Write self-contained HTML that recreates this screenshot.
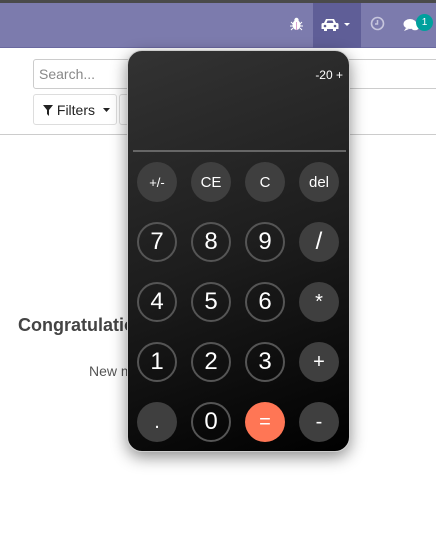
<!DOCTYPE html>
<html><head><style>
*{box-sizing:border-box;margin:0;padding:0}
body{width:436px;height:548px;overflow:hidden;background:#fff;font-family:"Liberation Sans",sans-serif;position:relative}
.top{position:absolute;left:0;top:0;width:436px;height:3px;background:#4a4a4a}
.nav{position:absolute;left:0;top:3px;width:436px;height:45px;background:#7c7bad;border-bottom:1px solid #6a69a0}
.act{position:absolute;left:313px;top:3px;width:48px;height:45px;background:#5f5e97}
.line{position:absolute;background:#ccc;height:1px}
.search{position:absolute;left:33px;top:59px;width:420px;height:30px;border:1px solid #ccc;border-radius:3px;color:#888;font-size:14px;padding:6px 5px}
.btn{position:absolute;left:33px;top:94px;width:84px;height:31px;border:1px solid #ddd;border-radius:3px;font-size:14px;color:#222;padding:7px 0 0 9px}
.btn2{position:absolute;left:119px;top:94px;width:30px;height:31px;border:1px solid #ddd;border-radius:3px}
.h{position:absolute;left:18px;top:315px;font-size:18px;font-weight:bold;color:#444}
.p{position:absolute;left:89px;top:363px;font-size:14px;color:#555}
.calc{position:absolute;left:127px;top:50px;width:223px;height:402px;border-radius:15px;background:linear-gradient(160deg,#333 0%,#1d1d1d 50%,#000 100%);box-shadow:0 5px 16px rgba(0,0,0,.45);border:1px solid #ccc}
.disp{position:absolute;right:6px;top:17px;color:#fff;font-size:12px}
.sep{position:absolute;left:5px;top:99px;width:213px;height:2px;background:#666}
.b{position:absolute;width:40px;height:40px;border-radius:50%;background:#3f3f3f;color:#fff;display:flex;align-items:center;justify-content:center;font-size:15px;font-family:"Liberation Sans",sans-serif}
.n{background:transparent;border:2px solid #555;font-size:24px}
.eq{background:#ff7655}
</style></head><body>
<div class="top"></div><div class="nav"></div><div class="act"></div>
<svg style="position:absolute;left:290px;top:17px" width="13" height="14" viewBox="0 0 13 14"><ellipse cx="6.5" cy="8" rx="4" ry="5" fill="#fff"/><circle cx="6.5" cy="3" r="2.2" fill="#fff"/><path d="M1 5l2 2M12 5l-2 2M0 9h3M10 9h3M1 13l2-2M12 13l-2-2" stroke="#fff"/><line x1="6.5" y1="5" x2="6.5" y2="13" stroke="#d8a0d0" stroke-width="1"/></svg>
<svg style="position:absolute;left:321px;top:18px" width="18" height="13" viewBox="0 0 18 13"><path d="M3 5l2-4h8l2 4h1a1.5 1.5 0 0 1 1.5 1.5V11H15v2h-3v-2H6v2H3v-2H.5V6.5A1.5 1.5 0 0 1 2 5z" fill="#fff"/><circle cx="4" cy="8" r="1.3" fill="#5f5e97"/><circle cx="14" cy="8" r="1.3" fill="#5f5e97"/><path d="M5.5 5l1-2.5h5l1 2.5z" fill="#5f5e97"/></svg>
<svg style="position:absolute;left:344px;top:23px" width="6" height="4"><path d="M0 0h6L3 3z" fill="#fff"/></svg>
<svg style="position:absolute;left:370px;top:16px" width="15" height="15"><circle cx="7.5" cy="7.5" r="6" fill="none" stroke="#c7c6dd" stroke-width="1.6"/><path d="M7.5 4v4h-2.5" fill="none" stroke="#c7c6dd" stroke-width="1.5"/></svg>
<svg style="position:absolute;left:403px;top:18px" width="17" height="14"><ellipse cx="7" cy="6" rx="6.5" ry="5" fill="#fff"/><path d="M3 10l-2 3 5-2z" fill="#fff"/><ellipse cx="12" cy="9" rx="4" ry="3.3" fill="#fff"/></svg>
<div style="position:absolute;left:416px;top:14px;width:17px;height:17px;border-radius:50%;background:#00a09d;color:#fff;font-size:10px;text-align:center;line-height:17px">1</div>
<div class="line" style="left:0;top:134px;width:436px"></div>
<div class="search">Search...</div>
<div class="btn"><svg width="10" height="11" style="vertical-align:-1px"><path d="M0 0h10L6 5v6L4 9V5z" fill="#222"/></svg> Filters <svg width="8" height="5" style="vertical-align:2px;margin-left:4px"><path d="M0 0h7L3.5 4z" fill="#222"/></svg></div>
<div class="btn2"></div>
<div class="h">Congratulations</div>
<div class="p">New messages</div>
<div class="calc">
<div class="disp">-20 +</div><div class="sep"></div>
<div class="b" style="left:9px;top:111px;font-size:13px">+/-</div>
<div class="b" style="left:63px;top:111px">CE</div>
<div class="b" style="left:117px;top:111px">C</div>
<div class="b" style="left:171px;top:111px">del</div>
<div class="b n" style="left:9px;top:171px">7</div>
<div class="b n" style="left:63px;top:171px">8</div>
<div class="b n" style="left:117px;top:171px">9</div>
<div class="b" style="left:171px;top:171px;font-size:24px">/</div>
<div class="b n" style="left:9px;top:231px">4</div>
<div class="b n" style="left:63px;top:231px">5</div>
<div class="b n" style="left:117px;top:231px">6</div>
<div class="b" style="left:171px;top:231px;font-size:20px">*</div>
<div class="b n" style="left:9px;top:291px">1</div>
<div class="b n" style="left:63px;top:291px">2</div>
<div class="b n" style="left:117px;top:291px">3</div>
<div class="b" style="left:171px;top:291px;font-size:20px">+</div>
<div class="b" style="left:9px;top:351px;font-size:20px">.</div>
<div class="b n" style="left:63px;top:351px">0</div>
<div class="b eq" style="left:117px;top:351px;font-size:20px">=</div>
<div class="b" style="left:171px;top:351px;font-size:20px">-</div>
</div>
</body></html>
